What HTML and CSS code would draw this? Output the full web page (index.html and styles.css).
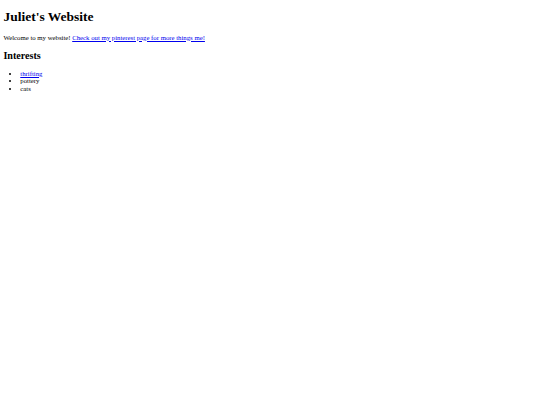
FILE: index.html
```html
<!DOCTYPE html>
<html>
<head>
<meta charset="utf-8">
<title>Juliet's Website</title>
<link rel="stylesheet" href="styles.css">
</head>
<body class="page">
<h1 class="title">Juliet's Website</h1>
<p class="intro">Welcome to my website! <a class="link" href="#">Check out my pinterest page for more things me!</a></p>
<h2 class="section">Interests</h2>
<ul class="list">
<li><a class="link" href="#">thrifting</a></li>
<li>pottery</li>
<li>cats</li>
</ul>
</body>
</html>
```
FILE: styles.css
```css
html {
  font-size: 6.75px;
}
.page {
  margin: 0;
  padding: 0 3.4px;
  font-family: "Liberation Serif", "Times New Roman", serif;
  font-size: 6.75px;
  line-height: 7.75px;
  color: #000;
  background: #fff;
}
.title {
  font-size: 13.5px;
  line-height: 15.6px;
  margin: 9px 0;
  font-weight: bold;
}
.intro {
  margin: 0 0 8.4px;
}
.section {
  font-size: 10.1px;
  line-height: 11.6px;
  margin: 0 0 8.4px;
  font-weight: bold;
}
.list {
  margin: 0;
  padding-left: 16.9px;
}
.link {
  color: #0000ee;
  text-decoration: underline;
}
```
